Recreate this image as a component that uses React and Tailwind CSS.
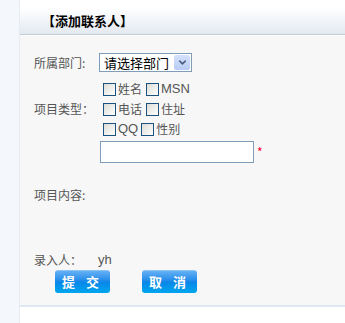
import { ChevronDown } from "lucide-react";

function Box({ label, latin }) {
  return (
    <label className="flex items-center">
      <span className="w-[13px] h-[13px] border border-[#1c5180] bg-gradient-to-br from-[#dcdcd7] to-white" />
      <span className={`ml-[2px] ${latin ? "font-['Liberation_Sans'] text-[13px]" : ""}`}>{label}</span>
    </label>
  );
}

export default function App() {
  return (
    <div className="flex w-[345px] h-[323px] bg-white font-['Noto_Sans_CJK_SC',sans-serif] text-[12px] text-[#555]">
      <div className="w-[20px] bg-[#f4f8fd] border-r border-[#e6ebf1]" />
      <div className="flex-1 pt-[8px]">
        <div className="h-[27px] border-b border-[#c2ccd6] bg-gradient-to-b from-white to-[#e3e9f0] flex items-center pl-[22px] text-[13px] font-bold text-black">
          【添加联系人】
        </div>
        <div className="bg-[#f7f7f7] h-[271px] mt-px border-b-2 border-[#dde8f3] pl-[14px] pt-[17px]">
          <div className="flex items-center h-[19px]">
            <span className="w-[65px]">所属部门:</span>
            <div className="w-[93px] h-[19px] border border-[#7f9db9] bg-white flex items-center justify-between pl-[4px] pr-px text-[13px] text-black">
              <span>请选择部门</span>
              <span className="w-[16px] h-[15px] bg-gradient-to-b from-[#d6e2fc] to-[#b7cbf5] rounded-[2px] flex items-center justify-center text-[#4d6185]">
                <ChevronDown size={11} strokeWidth={3.5} />
              </span>
            </div>
          </div>
          <div className="flex items-center mt-[10px]">
            <span className="w-[66px]">项目类型：</span>
            <div className="pl-[3px] flex flex-col gap-[6px] leading-[14px]">
              <div className="flex gap-[4px]"><Box label="姓名" /><Box label="MSN" latin /></div>
              <div className="flex gap-[4px]"><Box label="电话" /><Box label="住址" /></div>
              <div className="flex gap-[3px]"><Box label="QQ" latin /><Box label="性别" /></div>
            </div>
          </div>
          <div className="flex items-center ml-[66px] mt-[5px]">
            <input className="w-[154px] h-[22px] border border-[#7f9db9] bg-white outline-none" />
            <span className="ml-[3px] text-[#ff0033] text-[12px] leading-none">*</span>
          </div>
          <div className="mt-[24px] h-[16px] leading-[16px]">项目内容:</div>
          <div className="mt-[49px] flex items-center h-[16px]">
            <span className="w-[64px]">录入人：</span>
            <span className="font-['Liberation_Sans'] text-[13px]">yh</span>
          </div>
          <div className="flex gap-[32px] mt-[2px] ml-[21px]">
            {["提 交", "取 消"].map((t) => (
              <button
                key={t}
                className="w-[55px] h-[23px] rounded-[3px] border-t border-[#8cc4f5] bg-gradient-to-b from-[#63b0f5] via-[#0a86e8] to-[#00a6ef] text-white font-bold text-[13px] tracking-[4px] flex items-center justify-center"
              >
                {t}
              </button>
            ))}
          </div>
        </div>
      </div>
    </div>
  );
}
